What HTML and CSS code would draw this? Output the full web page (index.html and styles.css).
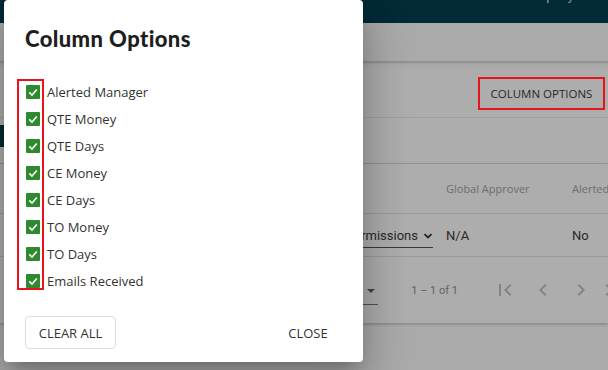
FILE: index.html
```html
<!DOCTYPE html>
<html lang="en">
<head>
    <meta charset="UTF-8">
    <meta name="viewport" content="width=device-width, initial-scale=1.0">
    <title>Column Options</title>
    <link rel="stylesheet" href="styles.css">
</head>
<body>

    <!-- Thanh tiêu đề trên cùng -->
    <header class="topbar">
        <span class="topbar-user">Company</span>
    </header>
    <div class="subbar"></div>

    <!-- Thanh công cụ -->
    <section class="card">
        <div class="toolbar">
            <button class="btn-outline">COLUMN OPTIONS</button>
        </div>
        <div class="toolbar-bottom">
            <button class="btn-dark">EXPORT</button>
        </div>
    </section>

    <!-- Bảng dữ liệu -->
    <section class="card table-card">
        <div class="grid-row head-row">
            <div class="cell"></div>
            <div class="cell">Global Approver</div>
            <div class="cell">Alerted Manager</div>
        </div>
        <div class="grid-row data-row">
            <div class="cell cell-select">
                <span class="select">Permissions
                    <svg width="10" height="10" viewBox="0 0 10 10"><path d="M1.5 3.2 L5 6.5 L8.5 3.2" fill="none" stroke="#333" stroke-width="1.8"/></svg>
                </span>
            </div>
            <div class="cell">N/A</div>
            <div class="cell">No</div>
        </div>
        <div class="paginator">
            <span class="page-label">Items per page:</span>
            <span class="page-size">10 <i class="caret"></i></span>
            <span class="page-range">1 – 1 of 1</span>
            <span class="page-btn"><svg width="24" height="24" viewBox="0 0 24 24"><path d="M18.41 16.59L13.82 12l4.59-4.59L17 6l-6 6 6 6zM6 6h2v12H6z"/></svg></span>
            <span class="page-btn"><svg width="24" height="24" viewBox="0 0 24 24"><path d="M15.41 7.41L14 6l-6 6 6 6 1.41-1.41L10.83 12z"/></svg></span>
            <span class="page-btn"><svg width="24" height="24" viewBox="0 0 24 24"><path d="M10 6L8.59 7.41 13.17 12l-4.58 4.59L10 18l6-6z"/></svg></span>
            <span class="page-btn last"><svg width="24" height="24" viewBox="0 0 24 24"><path d="M5.59 7.41L10.18 12l-4.59 4.59L7 18l6-6-6-6zM16 6h2v12h-2z"/></svg></span>
        </div>
    </section>

    <!-- Lớp phủ + hộp thoại -->
    <div class="backdrop"></div>
    <div class="dialog">
        <h2 class="dialog-title">Column Options</h2>

        <ul class="option-list">
            <li><span class="check"></span>Alerted Manager</li>
            <li><span class="check"></span>QTE Money</li>
            <li><span class="check"></span>QTE Days</li>
            <li><span class="check"></span>CE Money</li>
            <li><span class="check"></span>CE Days</li>
            <li><span class="check"></span>TO Money</li>
            <li><span class="check"></span>TO Days</li>
            <li><span class="check"></span>Emails Received</li>
        </ul>

        <div class="dialog-actions">
            <button class="btn-stroked">CLEAR ALL</button>
            <button class="btn-flat">CLOSE</button>
        </div>
    </div>

</body>
</html>
```

FILE: styles.css
```css
/* Trang nền */
body {
    margin: 0;
    width: 608px;
    height: 370px;
    overflow: hidden;
    background: #fbfbfb;
    font-family: Roboto, "Liberation Sans", sans-serif;
    position: relative;
}

button {
    font-family: "Open Sans", sans-serif;
    cursor: pointer;
}

.topbar {
    height: 23px;
    background: #043f51;
    display: flex;
    justify-content: flex-end;
    overflow: hidden;
}

.topbar-user {
    color: #e0e6e8;
    font-size: 13px;
    line-height: 13px;
    margin-top: -11px;
    margin-right: 34px;
}

.subbar {
    height: 38px;
    background: #fbfbfb;
    box-shadow: 0 2px 2px rgba(0, 0, 0, 0.18);
}

.card {
    background: #fff;
    margin-top: 8px;
    box-shadow: 0 2px 2px rgba(0, 0, 0, 0.16);
}

.toolbar {
    height: 48px;
    display: flex;
    align-items: center;
    justify-content: flex-end;
    padding-right: 3px;
    border-bottom: 1px solid #eaeaea;
}

/* khung đỏ đánh dấu: vẽ trên lớp phủ */
.btn-outline {
    position: relative;
    height: 33px;
    width: 127px;
    background: none;
    border: 0;
    color: #3a3a3a;
    font-size: 11.5px;
}

.btn-outline::after {
    content: "";
    position: absolute;
    inset: 0;
    z-index: 2;
    border: 2px solid #e8141c;
}

.toolbar-bottom {
    height: 45px;
    display: flex;
    align-items: flex-start;
}

.btn-dark {
    height: 22px;
    width: 70px;
    border: 0;
    background: #043f51;
    color: #fff;
    font-size: 12px;
    margin-top: 7px;
}

.table-card {
    margin-top: 1px;
}

.grid-row {
    display: grid;
    grid-template-columns: 446px 126px 126px;
    border-bottom: 1px solid #e4e4e4;
    white-space: nowrap;
}

.head-row {
    height: 49px;
    align-items: center;
    color: #a3a3a3;
    font-family: "Open Sans", sans-serif;
    font-size: 11px;
}

.data-row {
    height: 42px;
    align-items: center;
    color: #3c3c3c;
    font-size: 13px;
}

.cell-select {
    display: flex;
    justify-content: flex-end;
    padding-right: 13px;
}

.select {
    display: inline-flex;
    align-items: center;
    gap: 5px;
    border-bottom: 1px solid #555;
    padding-bottom: 4px;
    margin-top: 6px;
}

.paginator {
    height: 66px;
    width: 660px;
    display: flex;
    align-items: center;
    justify-content: flex-end;
    padding-right: 22px;
    box-sizing: border-box;
    color: #909090;
    font-size: 11px;
    white-space: nowrap;
}

.page-label {
    margin-right: 14px;
}

.page-size {
    display: inline-flex;
    align-items: center;
    justify-content: space-between;
    width: 56px;
    height: 20px;
    border-bottom: 1px solid #777;
    margin-top: 8px;
    color: #444;
}

.caret {
    width: 0;
    height: 0;
    border-left: 4px solid transparent;
    border-right: 4px solid transparent;
    border-top: 4px solid #666;
    margin-right: 3px;
    margin-top: -6px;
}

.page-range {
    margin: 0 28px 0 33px;
}

.page-btn {
    width: 38px;
    display: flex;
    justify-content: center;
    fill: #c2c2c2;
}

.page-btn.last {
    justify-content: flex-start;
}

/* Lớp phủ tối */
.backdrop {
    position: absolute;
    inset: 0;
    background: rgba(0, 0, 0, 0.32);
}

/* Hộp thoại */
.dialog {
    position: absolute;
    left: 4px;
    top: 0;
    width: 359px;
    height: 362px;
    box-sizing: border-box;
    padding: 0 21px;
    background: #fff;
    border-radius: 4px;
    box-shadow: 0 11px 15px -7px rgba(0, 0, 0, 0.2),
                0 24px 38px 3px rgba(0, 0, 0, 0.14),
                0 9px 46px 8px rgba(0, 0, 0, 0.12);
}

.dialog-title {
    margin: 0;
    padding-top: 26px;
    font-family: Lato, sans-serif;
    font-weight: 900;
    font-size: 22px;
    letter-spacing: 0.4px;
    line-height: 26px;
    color: #1e1e1e;
}

.option-list {
    list-style: none;
    margin: 26px 0 0;
    padding: 0;
    position: relative;
}

/* khung đỏ quanh cột checkbox */
.option-list::before {
    content: "";
    position: absolute;
    left: -8px;
    top: 1px;
    width: 27px;
    height: 211px;
    box-sizing: border-box;
    border: 2px solid #e8141c;
}

.option-list li {
    height: 27px;
    display: flex;
    align-items: center;
    font-family: "Open Sans", sans-serif;
    font-size: 13px;
    color: #333;
}

.check {
    width: 14px;
    height: 14px;
    margin: 0 7px 0 1px;
    border-radius: 1px;
    background: #2f8a2f url("data:image/svg+xml;utf8,<svg xmlns='http://www.w3.org/2000/svg' width='14' height='14'><path d='M3.3 7.4 L6 10 L10.8 4.4' fill='none' stroke='white' stroke-width='1.6'/></svg>") no-repeat center;
}

.dialog-actions {
    display: flex;
    justify-content: space-between;
    margin-top: 22px;
}

.btn-stroked {
    height: 33px;
    width: 91px;
    background: #fff;
    border: 1px solid #dcdcdc;
    border-radius: 4px;
    color: #333;
    font-size: 13px;
}

.btn-flat {
    height: 33px;
    width: 68px;
    background: none;
    border: 0;
    color: #333;
    font-size: 13px;
}
```
